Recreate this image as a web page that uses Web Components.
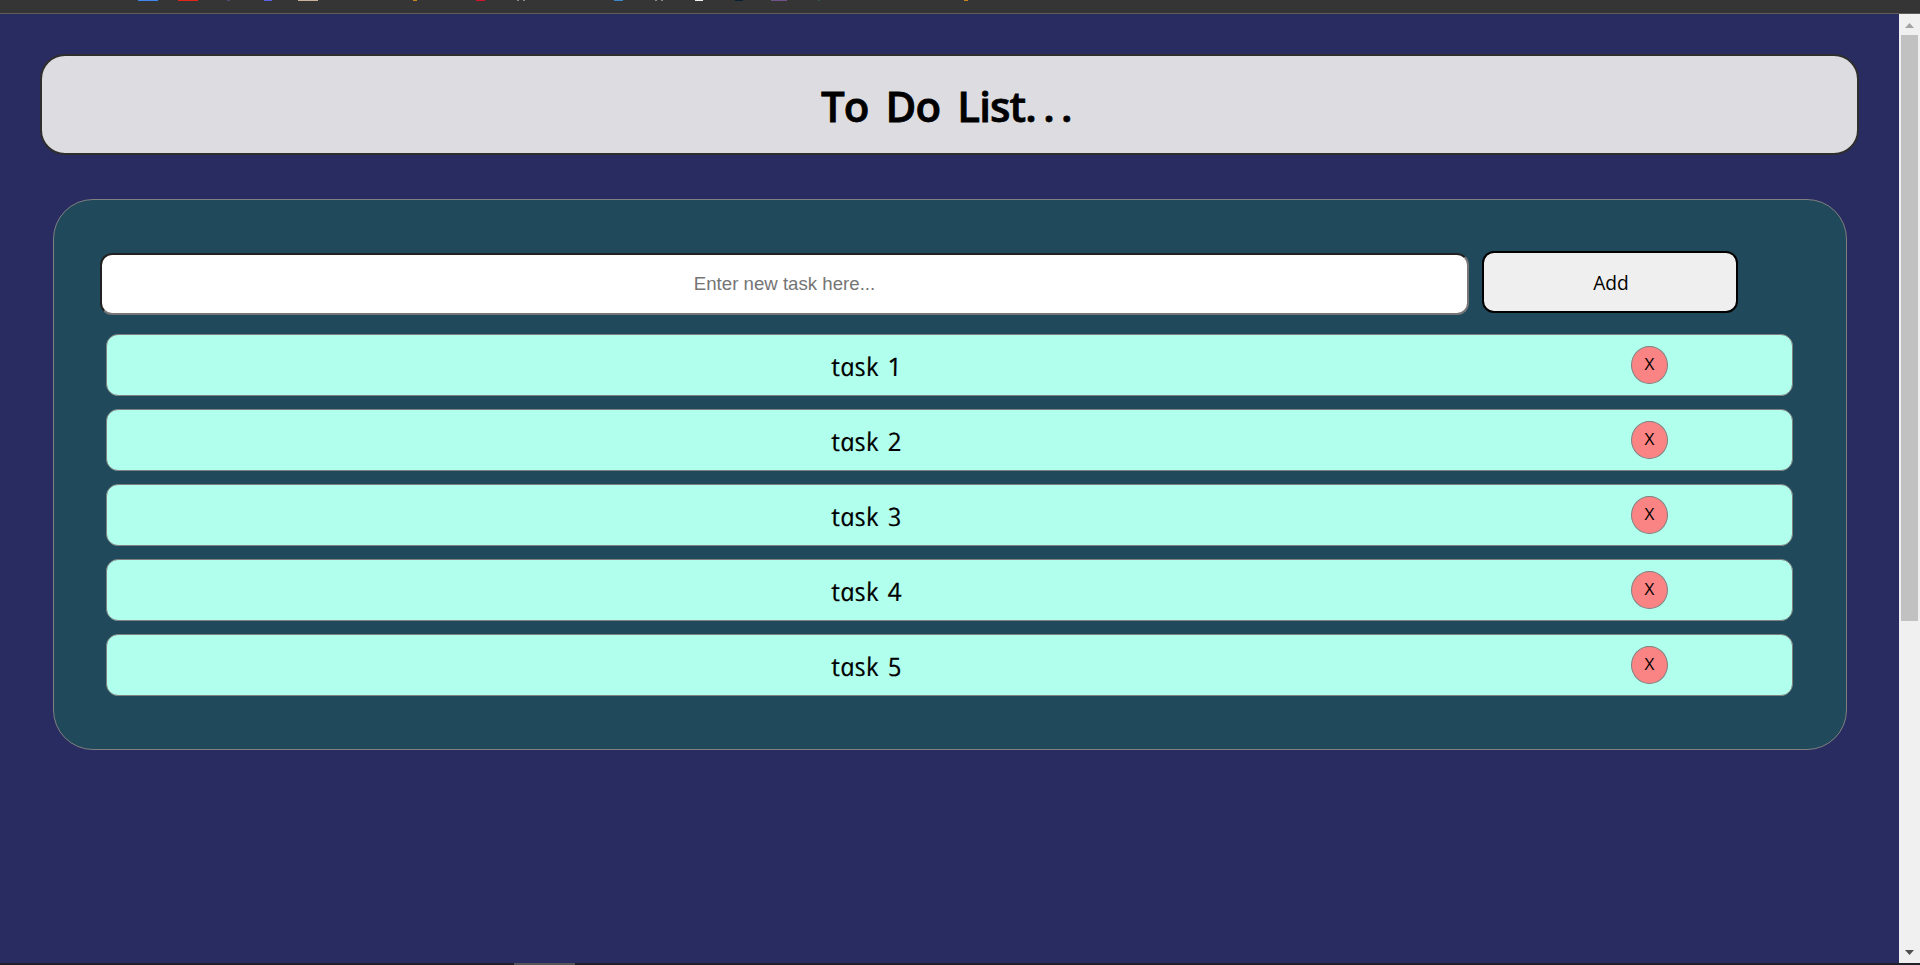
<!DOCTYPE html>
<html lang="en">
<head>
<meta charset="utf-8">
<title>To Do List</title>
<style>
html,body{margin:0;height:100%;overflow:hidden;background:#292c60}
body{font-family:"Comic Sans MS","Open Sans","Noto Sans",sans-serif;color:#000}
</style>
</head>
<body>
<todo-window>
  <todo-header>To Do List<span>...</span></todo-header>
  <todo-panel>
    <task-entry></task-entry>
    <task-row>task 1</task-row>
    <task-row>task 2</task-row>
    <task-row>task 3</task-row>
    <task-row>task 4</task-row>
    <task-row>task 5</task-row>
  </todo-panel>
</todo-window>
<script>
const define = (name, html) => customElements.define(name, class extends HTMLElement {
  constructor() {
    super();
    this.attachShadow({mode: 'open'}).innerHTML = html;
  }
});

define('bookmark-strip', `
<style>:host{display:block;height:13px;background:#353535;border-bottom:1px solid #5f5c59}svg{display:block}</style>
<svg width="1920" height="1" shape-rendering="crispEdges">
<rect x="138" width="20" height="1" fill="#3f86ee"/><rect x="178" width="20" height="1" fill="#e32619"/>
<rect x="227" width="3" height="1" fill="#494d78"/><rect x="264" width="8" height="1" fill="#5a62e8"/>
<rect x="298" width="20" height="1" fill="#c9b19b"/><rect x="413" width="4" height="1" fill="#c5851c"/>
<rect x="476" width="9" height="1" fill="#d3122c"/><rect x="517" width="2" height="1" fill="#8a8a8a"/>
<rect x="523" width="2" height="1" fill="#8a8a8a"/><rect x="614" width="9" height="1" fill="#3b86c8"/>
<rect x="655" width="2" height="1" fill="#8a8a8a"/><rect x="661" width="2" height="1" fill="#8a8a8a"/>
<rect x="695" width="8" height="1" fill="#f0f0f0"/><rect x="735" width="8" height="1" fill="#042238"/>
<rect x="771" width="16" height="1" fill="#6e5289"/><rect x="818" width="2" height="1" fill="#2d5a48"/>
<rect x="964" width="4" height="1" fill="#c5851c"/></svg>`);

define('scroll-rail', `
<style>:host{display:flex;flex-direction:column;align-items:center;width:21px;background:#f0f0f0}
svg{display:block;flex:none}.thumb{width:17px;height:586px;background:#c1c1c1}.gap{flex:1}</style>
<svg width="21" height="21"><path d="M6 14L10.500 9L15 14Z" fill="#a3a3a3"/></svg>
<div class="thumb"></div><div class="gap"></div>
<svg width="21" height="21"><path d="M6 8L15 8L10.500 13Z" fill="#505050"/></svg>`);

define('task-bar', `
<style>:host{display:flex;height:2px;background:#211f29;padding-left:514px}i{width:61px;background:#575459}</style><i></i>`);

define('todo-window', `
<style>:host{display:flex;flex-direction:column;height:965px;width:1920px}
.view{flex:1;display:flex;min-height:0}main{flex:1;padding:40px 40px 0;box-sizing:border-box}</style>
<bookmark-strip></bookmark-strip>
<div class="view"><main><slot></slot></main><scroll-rail></scroll-rail></div>
<task-bar></task-bar>`);

define('todo-header', `
<style>:host{display:flex;justify-content:center;align-items:center;box-sizing:border-box;height:101px;border:2px solid #2e2e2e;border-radius:25px;background:#dddce1}
h1{margin:0;font-size:42px;line-height:60px;font-weight:600;letter-spacing:-.9px;word-spacing:7px;white-space:nowrap;padding:3px 0 0 1px;-webkit-text-stroke:.8px #000}
::slotted(span){letter-spacing:6.400px}</style>
<h1><slot></slot></h1>`);

define('todo-panel', `
<style>:host{display:flex;flex-direction:column;gap:13px;box-sizing:border-box;height:551px;margin:44px 12px 0 13px;padding:51px 53px 0 46px;border:1px solid #808080;border-radius:40px;background:#20495b}
::slotted(task-row){margin-left:6px}</style><slot></slot>`);

define('task-entry', `
<style>:host{display:flex;gap:13px;height:70px}
input{box-sizing:border-box;width:1369px;height:62px;margin:2px 0 0;padding:0 10px;border:2px solid;border-color:#212121 #767676 #767676 #212121;border-radius:12px;background:#fff;text-align:center;font:18.67px "Liberation Sans",Arial,sans-serif}
input::placeholder{color:#757575;opacity:1}
button{box-sizing:border-box;width:256px;height:62px;padding:1px 0 0 2px;border:2px solid #000;border-radius:12px;background:#efefef;color:#000;font-family:inherit;font-size:19.2px}
</style>
<input placeholder="Enter new task here..."><button>Add</button>`);

define('task-row', `
<style>:host{display:flex;align-items:flex-start;box-sizing:border-box;height:62px;border:1px solid #808080;border-radius:12px;background:#b1ffed}
.name{width:1518px;text-align:center;font-size:25.600px;line-height:36px;padding-top:14px}
.name span{display:inline-block;font-style:italic;transform:skewX(11deg);letter-spacing:.2px;word-spacing:2px;-webkit-text-stroke:.15px #000}
button{box-sizing:border-box;width:37px;height:38px;margin:11px 0 0 6px;padding:0 0 2px;border:1px solid #808080;border-radius:50%;background:#fa8383;color:#000;font-family:inherit;font-size:17px;line-height:20px}</style>
<div class="name"><span><slot></slot></span></div><button>X</button>`);
</script>
</body>
</html>
